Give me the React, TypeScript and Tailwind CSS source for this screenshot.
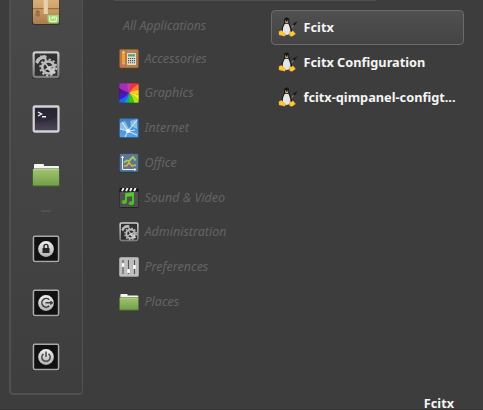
import React from "react";

type IconProps = { className?: string };

const PackageIcon = () => (
  <svg viewBox="0 0 28 28" className="block h-7 w-7">
    <defs>
      <linearGradient id="box" x1="0" y1="0" x2="0" y2="1">
        <stop offset="0" stopColor="#e0bb8a" />
        <stop offset=".5" stopColor="#d0a36c" />
        <stop offset=".53" stopColor="#9a7042" />
        <stop offset=".57" stopColor="#c79a66" />
        <stop offset="1" stopColor="#a97d4c" />
      </linearGradient>
    </defs>
    <rect x="0" y="1" width="28" height="27" rx="2" fill="#242424" opacity=".6" />
    <rect x=".9" y="-6" width="26.2" height="33" rx="2" fill="url(#box)" />
    <path d="M11.7 0h4.2v17h-4.2z" fill="#e8cfa8" />
    <path d="M4 14h3.2v5H4zM5.6 13v2" fill="#a5764a" stroke="#94683e" strokeWidth=".7" />
    <path d="M15.5 18h11.3v6q0 2-2 2h-6q-3.3 0-3.3-4z" fill="#9bdc6f" />
    <path d="M17.6 19.5v3.3q0 1.7 1.7 1.7h3.5q1.7 0 1.7-1.7V20M20 22.5v-3M22.2 22.5V20M20 20h4.5" stroke="#e8fbdc" strokeWidth="1.1" fill="none" />
  </svg>
);

const GearsIcon = ({ className }: IconProps) => (
  <svg viewBox="0 0 28 28" className={className}>
    <defs>
      <linearGradient id="steel" x1="0" y1="0" x2="0" y2="1">
        <stop stopColor="#cfcfcf" />
        <stop offset="1" stopColor="#7b7b7b" />
      </linearGradient>
    </defs>
    <rect x="0" y="1" width="28" height="27" rx="2.5" fill="#202020" opacity=".6" />
    <rect x="1.6" y="1.4" width="24.8" height="24.6" rx="1.8" fill="#303030" stroke="url(#steel)" strokeWidth="2.3" />
    <g fill="none" stroke="#bcbcbc">
      <circle cx="16.3" cy="16.5" r="8" strokeWidth="2" strokeDasharray="2.2 2" />
      <circle cx="16.3" cy="16.5" r="6" strokeWidth="2.6" />
      <path d="m16.3 16.5-3.5-5m3.5 5 6-2m-6 2 3.5 6m-3.5-6-5 4" strokeWidth="1.6" />
      <path d="m4.5 12 2.5-4 4-2 3.5.5" strokeWidth="3.4" />
      <path d="M4.5 8.5 7 10M8.5 4.5 10 8M12.5 4v4" strokeWidth="1.4" />
    </g>
    <path d="m14 18 3-3 4 2 2 5-3 2-2-4z" fill="#d5d5d5" opacity=".8" />
  </svg>
);

const TerminalIcon = () => (
  <svg viewBox="0 0 28 28" className="block h-7 w-7">
    <defs>
      <linearGradient id="screen" x1="0" y1="0" x2="0" y2="1">
        <stop stopColor="#252331" />
        <stop offset=".5" stopColor="#2c2938" />
        <stop offset="1" stopColor="#494256" />
      </linearGradient>
    </defs>
    <rect x="0" y="1" width="28" height="27" rx="2" fill="#242424" opacity=".5" />
    <rect x="1.7" y="1.5" width="24.8" height="25" rx="1" fill="url(#screen)" stroke="#d2d2d2" strokeWidth="2.3" />
    <path d="M3 18Q18 17 25 11v14H3z" fill="#fff" opacity=".03" />
    <path d="m6 7 3.5 2L6 11M10 11.7h4" fill="none" stroke="#f4f4f4" strokeWidth="1.4" />
  </svg>
);

const FolderIcon = ({ className }: IconProps) => (
  <svg viewBox="0 0 28 23" preserveAspectRatio="none" className={className}>
    <defs>
      <linearGradient id="folder" x1="0" y1="0" x2="0" y2="1">
        <stop stopColor="#a0c471" />
        <stop offset="1" stopColor="#749e48" />
      </linearGradient>
    </defs>
    <path d="M2 1q0-1 1-1h8q1 0 1 1v1h14q1 0 1 1v5H2z" fill="#f5f5f3" />
    <rect x=".3" y="4.4" width="27.4" height="18.2" rx="1" fill="#4d6431" />
    <rect x="1" y="5" width="26" height="16.4" rx=".5" fill="url(#folder)" />
    <path d="M1.2 5.6h25.6" stroke="#bbd992" strokeWidth=".8" />
  </svg>
);

const SessionIcon = ({ kind }: { kind: "lock" | "logout" | "power" }) => (
  <svg viewBox="0 0 28 28" className="block h-7 w-7">
    <defs>
      <linearGradient id="disc" x1="0" y1="0" x2="0" y2="1">
        <stop stopColor="#f0f0f0" />
        <stop offset="1" stopColor="#b0b0b0" />
      </linearGradient>
    </defs>
    <rect x="0" y="1" width="28" height="27" rx="2" fill="#222" opacity=".5" />
    <rect x="1.4" y="1.2" width="25.2" height="25.3" rx="1.5" fill="#111" stroke="#a9a9a9" strokeWidth="1.6" />
    <circle cx="14" cy="14" r="7.9" fill="url(#disc)" />
    {kind === "lock" && (
      <>
        <path d="M12 14v-2.6a2 2 0 0 1 4 0V14" fill="none" stroke="#252525" strokeWidth="1.4" />
        <path d="M10.5 13h7v5h-7z" fill="#252525" />
      </>
    )}
    {kind === "logout" && (
      <path d="M17.2 10.8a4.3 4.3 0 1 0 0 6.1M13.5 13.8h6.8m-2-1.5 2 1.5-2 1.5" fill="none" stroke="#3d3d3d" strokeWidth="1.5" />
    )}
    {kind === "power" && (
      <path d="M11.5 10.8a4.2 4.2 0 1 0 5 0M14 8.5V14" fill="none" stroke="#484848" strokeWidth="1.5" />
    )}
  </svg>
);

const AccessoriesIcon = () => (
  <svg viewBox="0 0 20 20" className="block h-5 w-5">
    <rect width="20" height="20" rx="1.5" fill="#5f3a1b" />
    <rect x=".6" y=".5" width="18.8" height="18.2" rx="1" fill="#b98351" />
    <path d="M2 1v18M7 1v18M18 1v18" stroke="#9d6739" strokeWidth=".5" />
    <path d="m3 4 1.5-2L6 4v11H3z" fill="#f6a02b" />
    <path d="M3 4 4.5 2 6 4" fill="#efddb4" />
    <path d="M3 14h3v1.5H3z" fill="#b8bac1" />
    <path d="M3 15.5h3v2H3z" fill="#e6615b" />
    <rect x="8" y="4" width="9" height="12" rx=".7" fill="#dedfd4" />
    <path d="M9 5.2h7v2.3H9z" fill="#5d9b80" />
    <path d="M9 9.5h7M9 11.6h7M9 13.7h7" stroke="#474c4c" strokeWidth="1.1" strokeDasharray="1.2 .8" />
  </svg>
);

const GraphicsIcon = () => (
  <svg viewBox="0 0 20 20" className="block h-5 w-5">
    <defs>
      <clipPath id="rounded">
        <rect width="20" height="20" rx="1.8" />
      </clipPath>
    </defs>
    <g clipPath="url(#rounded)">
      <rect width="20" height="20" fill="#8a3aa0" />
      <path fill="#a42eb5" d="M10 10Q5 8 0 5V0h8q0 5 2 10" />
      <path fill="#cf39a0" d="M10 10Q8 5 8 0h5q-2 5-3 10" />
      <path fill="#f8303d" d="M10 10q1-5 3-10h7v1q-6 3-10 9" />
      <path fill="#fb7a28" d="M10 10q4-6 10-9v6q-6 0-10 3" />
      <path fill="#ffc82d" d="M10 10q4-3 10-3v5q-5-2-10-2" />
      <path fill="#f2ed10" d="M10 10q5 0 10 2v6q-4-5-10-8" />
      <path fill="#aae816" d="M10 10q6 3 10 8v2h-5q-1-6-5-10" />
      <path fill="#2fcb17" d="M10 10q4 4 5 10H9q2-6 1-10" />
      <path fill="#12a5b0" d="M10 10q1 4-1 10H5q4-5 5-10" />
      <path fill="#2163f3" d="M10 10q-1 5-5 10H0v-3q6-2 10-7" />
      <path fill="#3222ce" d="M10 10q-4 5-10 7v-6q5 1 10-1" />
      <path fill="#5a109c" d="M10 10q-5 2-10 1V5q5 3 10 5" />
    </g>
    <rect x=".4" y=".4" width="19.2" height="19.2" rx="1.5" fill="none" stroke="#222" opacity=".35" strokeWidth=".8" />
  </svg>
);

const InternetIcon = () => (
  <svg viewBox="0 0 20 20" className="block h-5 w-5">
    <defs>
      <linearGradient id="sky" x1="0" y1="0" x2="0" y2="1">
        <stop stopColor="#3d80bd" />
        <stop offset="1" stopColor="#5ca3e4" />
      </linearGradient>
    </defs>
    <rect x=".4" y=".4" width="19.2" height="19.2" rx="1.5" fill="url(#sky)" stroke="#2a5e94" strokeWidth=".8" />
    <path d="m1 5 5-2 4 8-5 1-4-1zM11 3l7-2v10l-6-3z" fill="#c6e1f5" opacity=".55" />
    <path d="m3 4 6 9 9-11M9 13 6 19M9 13l9 4M1 11l8 2 7-1" fill="none" stroke="#d7edfc" strokeWidth="1.1" opacity=".9" />
    <circle cx="9" cy="13" r="2" fill="#eff9ff" />
  </svg>
);

const OfficeIcon = () => (
  <svg viewBox="0 0 20 20" className="block h-5 w-5">
    <rect y=".5" width="20" height="19.5" rx="2" fill="#273949" />
    <rect x=".7" y=".7" width="18.6" height="18" rx="1.3" fill="#597793" />
    <path d="M3.5 3v13.5H17M2.5 5l1-2 1 2M15 15.5l2 1-2 1M3 12h1M7 16v1" fill="none" stroke="#eef1f3" strokeWidth="1" />
    <path d="m5 9.5 3-2 2 .5 4-4 2.5 3.5" fill="none" stroke="#a5cb57" strokeWidth="1.8" />
    <path d="m5 13 3-.5 2-3 3 3.5 4-1" fill="none" stroke="#e8ae32" strokeWidth="1.5" />
  </svg>
);

const SoundIcon = () => (
  <svg viewBox="0 0 20 20" className="block h-5 w-5">
    <rect width="20" height="20" rx="2" fill="#252525" />
    <rect x=".7" y="4" width="18.6" height="15" rx="1" fill="#505050" />
    <path d="M1 0h18v3H1z" fill="#111" />
    <path d="m3 3 1.7-3M7 3l1.7-3M11 3l1.7-3M15 3l1.7-3" stroke="#eee" strokeWidth="2" />
    <path d="M7 14V6l7-1v10M7 8l7-1" fill="none" stroke="#52cc2b" strokeWidth="1.8" />
    <ellipse cx="5.3" cy="14" rx="2.6" ry="2" fill="#4bc024" />
    <ellipse cx="12.3" cy="15.3" rx="2.6" ry="2" fill="#4bc024" />
  </svg>
);

const PreferencesIcon = () => (
  <svg viewBox="0 0 20 20" className="block h-5 w-5">
    <rect width="20" height="20" rx="2" fill="#888" />
    <rect x=".5" y=".4" width="19" height="18.8" rx="1.5" fill="#bebebe" />
    <path d="M4 3v14M9.5 3v14M15.5 3v14" stroke="#555" strokeWidth="1.1" />
    <path d="M2.5 6h3v4h-3zM8 12h3v4H8zM14 8h3v4h-3z" fill="#fff" stroke="#999" strokeWidth=".3" />
  </svg>
);

const PenguinIcon = () => (
  <svg viewBox="0 0 20 20" className="block h-5 w-5 shrink-0">
    <path d="m12.5 12.5 3.5-5" stroke="#a26e43" strokeWidth="1.2" />
    <path d="M14.8 7.8Q15 6 19.8 4.3L16.5 8.7z" fill="#191c1f" />
    <path d="M6.1 5Q5.8.6 8.6.6 11.5.6 11.3 5q0 2 1.8 5 1.3 2.4.9 6L10 18H6l-3-3q.1-4 2.3-7 .8-1.5.8-3" fill="#131619" />
    <path d="M7 6.5q1.6 1 3.2 0 2.9 5.5 2 9.3-.9 2.4-4.2 2.2Q3.8 16.3 5 11q.7-2.2 2-4.5" fill="#e4e5e7" />
    <path d="M7.2 3.6h.8v1.2h-.8zM9.4 3.6h.8v1.2h-.8z" fill="#ddd" />
    <path d="m6.9 5.3 1.7-.8 1.9.8-1.8 1.2z" fill="#efb432" />
    <path d="m.9 14.5 2.8-1.2 4 4-.7 1.9-6-1.2zM11.5 14.6l1.5.4 2-1.3 2.6 3.2-3.7 2.6-2.4-.8z" fill="#ffc834" stroke="#d99821" strokeWidth=".3" />
  </svg>
);

const categories = [
  { label: "Accessories", icon: <AccessoriesIcon /> },
  { label: "Graphics", icon: <GraphicsIcon /> },
  { label: "Internet", icon: <InternetIcon /> },
  { label: "Office", icon: <OfficeIcon /> },
  { label: "Sound & Video", icon: <SoundIcon /> },
  { label: "Administration", icon: <GearsIcon className="block h-5 w-5" /> },
  { label: "Preferences", icon: <PreferencesIcon /> },
  { label: "Places", icon: <FolderIcon className="mt-0.5 block h-[17px] w-5" /> },
];

const apps = ["Fcitx", "Fcitx Configuration", "fcitx-qimpanel-configt..."];

export default function App() {
  return (
    <div className="flex h-[410px] w-[483px] overflow-hidden border-b border-[#373435] bg-[#3d3d3d] font-['Noto_Sans',sans-serif] leading-5">
      <aside className="ml-[9px] flex h-[395px] w-[74px] shrink-0 flex-col items-center rounded-b-[4px] border-2 border-t-0 border-r border-[#505050] bg-linear-to-b from-[#494949] to-[#3e3e3e] pr-px">
        <div className="-mt-[3px] flex flex-col gap-[26px]">
          <PackageIcon />
          <GearsIcon className="block h-7 w-7" />
          <TerminalIcon />
        </div>
        <FolderIcon className="mt-[31px] block h-[23px] w-7" />
        <div className="mt-[23px] h-[2px] w-[10px] bg-[#505050]" />
        <div className="mt-[23px] flex flex-col gap-[26px]">
          <SessionIcon kind="lock" />
          <SessionIcon kind="logout" />
          <SessionIcon kind="power" />
        </div>
      </aside>
      <main className="ml-[31px] flex min-w-0 flex-1 flex-col">
        <div className="h-px w-[262px] shrink-0 bg-[#505050]" />
        <div className="flex h-[392px] shrink-0">
          <nav className="w-[157px] pt-[15px] pl-[5px] text-[12.3px] text-[#646464] italic">
            <div className="h-[32.5px] pl-1">All Applications</div>
            {categories.map(({ label, icon }) => (
              <div key={label} className="flex h-[34.75px] items-start gap-[5.5px]">
                <span className="flex h-5 w-5 items-center">{icon}</span>
                <span className="pt-[0.2px] text-[12.5px] whitespace-nowrap">{label}</span>
              </div>
            ))}
          </nav>
          <section className="flex w-[193px] flex-col pt-[9px] font-bold text-[#f5f5f5]">
            {apps.map((app, index) => (
              <button
                key={app}
                className={
                  index === 0
                    ? "flex h-[35px] w-[193px] items-center gap-[5.5px] rounded-[4px] border border-[#6b6b6b] bg-linear-to-b from-[#505050] to-[#444444] pb-px pl-[6px] text-left"
                    : "flex h-[34.7px] w-[193px] items-center gap-[5.5px] border border-transparent pb-px pl-[6px] text-left"
                }
              >
                <PenguinIcon />
                <span className="text-[12.75px] whitespace-nowrap">{app}</span>
              </button>
            ))}
          </section>
        </div>
        <footer className="h-4 shrink-0 pr-[29px] text-right text-[12.7px] leading-[20px] font-bold text-[#f5f5f5]">
          Fcitx
        </footer>
      </main>
    </div>
  );
}
